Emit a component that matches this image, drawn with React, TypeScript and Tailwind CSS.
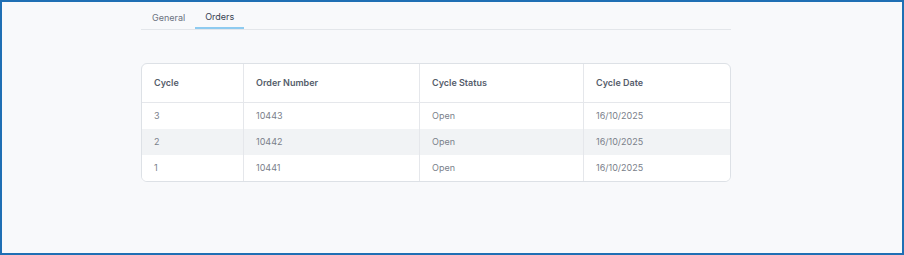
import React from "react";

const rows = [
  { cycle: "3", order: "10443", status: "Open", date: "16/10/2025" },
  { cycle: "2", order: "10442", status: "Open", date: "16/10/2025" },
  { cycle: "1", order: "10441", status: "Open", date: "16/10/2025" },
];

export default function App() {
  return (
    <div
      className="w-[904px] h-[255px] border-2 border-[#1f6fb4] bg-[#f8f9fb] box-border"
      style={{ fontFamily: "Inter, 'Noto Sans', sans-serif" }}
    >
      <div className="ml-[139px] w-[590px] pt-[4px]">
        <div className="flex border-b border-[#e3e6ea] text-[9px]">
          <div className="h-[23px] flex items-center pl-[11px] pr-[10px] text-[#6b7280]">General</div>
          <div className="h-[23px] flex items-center px-[10px] text-[#374151] border-b-2 border-[#8ecbf0] -mb-px">Orders</div>
        </div>
        <div className="mt-[33px] bg-white border border-[#dde1e6] rounded-[6px] overflow-hidden">
          <div className="grid grid-cols-[101px_176px_164px_1fr] text-[9px]">
            <div className="h-[39px] flex items-center pl-[12px] font-semibold text-[#555d6b] border-b border-[#e5e7eb]">Cycle</div>
            <div className="h-[39px] flex items-center pl-[12px] font-semibold text-[#555d6b] border-b border-l border-[#e5e7eb]">Order Number</div>
            <div className="h-[39px] flex items-center pl-[12px] font-semibold text-[#555d6b] border-b border-l border-[#e5e7eb]">Cycle Status</div>
            <div className="h-[39px] flex items-center pl-[12px] font-semibold text-[#555d6b] border-b border-l border-[#e5e7eb]">Cycle Date</div>
            {rows.map((r, i) => {
              const bg = i === 1 ? "bg-[#f1f3f5]" : "bg-white";
              return (
                <React.Fragment key={r.cycle}>
                  <div className={`h-[26px] flex items-center pl-[12px] text-[#7a808a] ${bg}`}>{r.cycle}</div>
                  <div className={`h-[26px] flex items-center pl-[12px] text-[#7a808a] border-l border-[#e5e7eb] ${bg}`}>{r.order}</div>
                  <div className={`h-[26px] flex items-center pl-[12px] text-[#7a808a] border-l border-[#e5e7eb] ${bg}`}>{r.status}</div>
                  <div className={`h-[26px] flex items-center pl-[12px] text-[#7a808a] border-l border-[#e5e7eb] ${bg}`}>{r.date}</div>
                </React.Fragment>
              );
            })}
          </div>
        </div>
      </div>
    </div>
  );
}
